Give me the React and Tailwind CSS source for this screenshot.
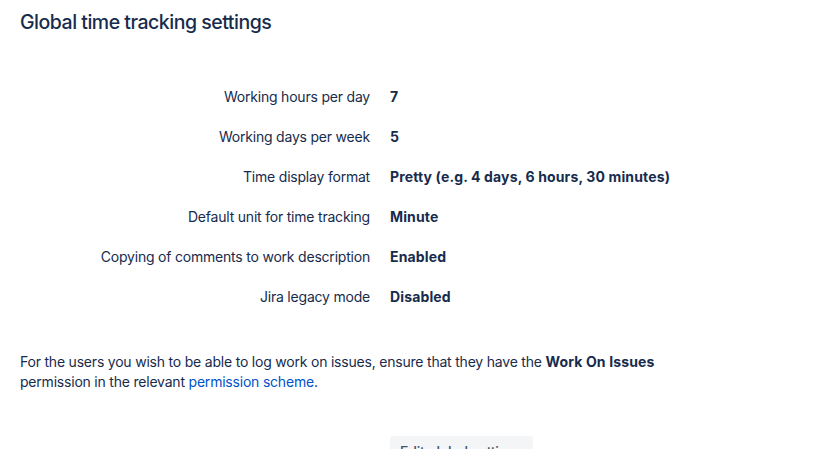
export default function App() {
  const rows = [
    ["Working hours per day", "7"],
    ["Working days per week", "5"],
    ["Time display format", "Pretty (e.g. 4 days, 6 hours, 30 minutes)"],
    ["Default unit for time tracking", "Minute"],
    ["Copying of comments to work description", "Enabled"],
    ["Jira legacy mode", "Disabled"],
  ];
  return (
    <div
      className="w-[839px] h-[449px] overflow-hidden bg-white text-[#172b4d] px-[20px] tracking-[-0.013em]"
      style={{ fontFamily: 'Inter, "Noto Sans", sans-serif' }}
    >
      <h1 className="pt-[10px] text-[19.5px] leading-[24px] font-medium tracking-[-0.025em]">
        Global time tracking settings
      </h1>
      <div className="mt-[42px] grid grid-cols-[350px_1fr] gap-x-[20px] text-[14px]">
        {rows.map(([label, value]) => (
          <div key={label} className="contents">
            <div className="h-[40px] flex items-center justify-end">{label}</div>
            <div className="h-[40px] flex items-center font-bold tracking-[0.01em]">{value}</div>
          </div>
        ))}
      </div>
      <p className="mt-[36px] text-[14px] leading-[20px] w-[660px]">
        For the users you wish to be able to log work on issues, ensure that they have the{" "}
        <span className="font-bold tracking-[0.01em]">Work On Issues</span> permission in the relevant{" "}
        <a className="text-[#0052cc]">permission scheme</a>.
      </p>
      <div className="mt-[44px] pl-[370px]">
        <button className="h-[32px] px-[10px] rounded-[3px] bg-[#f4f5f7] text-[#42526e] text-[14px] font-medium leading-[20px]">
          Edit global settings
        </button>
      </div>
    </div>
  );
}
